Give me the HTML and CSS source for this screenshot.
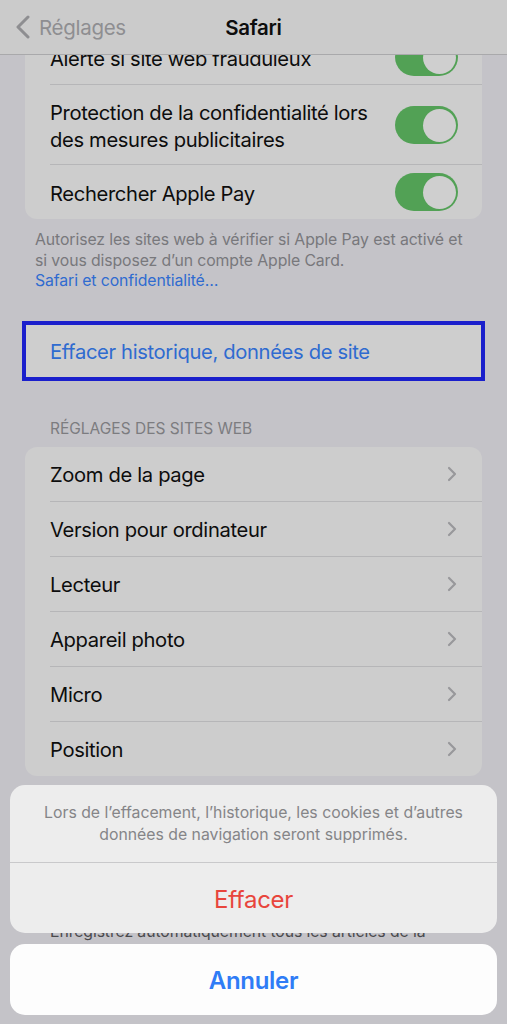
FILE: index.html
```html
<!DOCTYPE html>
<html lang="fr">
<head>
  <meta charset="UTF-8">
  <title>Safari</title>
  <link rel="stylesheet" href="styles.css">
</head>
<body>

  <div class="nav">
    <div class="back">
      <svg width="16" height="24" viewBox="0 0 16 24"><polyline points="13,2 3,12 13,22" fill="none" stroke="#8e8e91" stroke-width="3" stroke-linecap="round" stroke-linejoin="round"/></svg>
      <span>Réglages</span>
    </div>
    <div class="title">Safari</div>
    <div></div>
  </div>

  <div class="page">
    <div class="card">
      <div class="row"><div class="row-in"><span class="label">Alerte si site web frauduleux</span><span class="toggle"></span></div></div>
      <div class="row"><div class="row-in tall"><span class="label">Protection de la confidentialité lors<br>des mesures publicitaires</span><span class="toggle"></span></div></div>
      <div class="row"><div class="row-in"><span class="label">Rechercher Apple Pay</span><span class="toggle"></span></div></div>
    </div>
    <p class="footer">Autorisez les sites web à vérifier si Apple Pay est activé et si vous disposez d’un compte Apple Card.<br><span class="link">Safari et confidentialité…</span></p>

    <div class="highlight">Effacer historique, données de site</div>

    <h2 class="section">Réglages des sites web</h2>
    <div class="card">
      <div class="row"><div class="row-in"><span class="label">Zoom de la page</span><svg class="chev" width="10" height="16" viewBox="0 0 10 16"><polyline points="2,2 8,8 2,14" fill="none" stroke="#98989b" stroke-width="2.2" stroke-linecap="round" stroke-linejoin="round"/></svg></div></div>
      <div class="row"><div class="row-in"><span class="label">Version pour ordinateur</span><svg class="chev" width="10" height="16" viewBox="0 0 10 16"><polyline points="2,2 8,8 2,14" fill="none" stroke="#98989b" stroke-width="2.2" stroke-linecap="round" stroke-linejoin="round"/></svg></div></div>
      <div class="row"><div class="row-in"><span class="label">Lecteur</span><svg class="chev" width="10" height="16" viewBox="0 0 10 16"><polyline points="2,2 8,8 2,14" fill="none" stroke="#98989b" stroke-width="2.2" stroke-linecap="round" stroke-linejoin="round"/></svg></div></div>
      <div class="row"><div class="row-in"><span class="label">Appareil photo</span><svg class="chev" width="10" height="16" viewBox="0 0 10 16"><polyline points="2,2 8,8 2,14" fill="none" stroke="#98989b" stroke-width="2.2" stroke-linecap="round" stroke-linejoin="round"/></svg></div></div>
      <div class="row"><div class="row-in"><span class="label">Micro</span><svg class="chev" width="10" height="16" viewBox="0 0 10 16"><polyline points="2,2 8,8 2,14" fill="none" stroke="#98989b" stroke-width="2.2" stroke-linecap="round" stroke-linejoin="round"/></svg></div></div>
      <div class="row"><div class="row-in"><span class="label">Position</span><svg class="chev" width="10" height="16" viewBox="0 0 10 16"><polyline points="2,2 8,8 2,14" fill="none" stroke="#98989b" stroke-width="2.2" stroke-linecap="round" stroke-linejoin="round"/></svg></div></div>
    </div>

    <!-- section "Liste de lecture" sits under the sheet, only this text peeks through -->
    <p class="footer dark">Enregistrez automatiquement tous les articles de la liste de lecture depuis iCloud pour les lire hors connexion.</p>

    <div class="card last">
      <div class="row"><div class="row-in"></div></div>
    </div>
  </div>

  <div class="sheet">
    <div class="group">
      <p class="message">Lors de l’effacement, l’historique, les cookies et d’autres données de navigation seront supprimés.</p>
      <div class="action danger">Effacer</div>
    </div>
    <div class="group cancel">
      <div class="action">Annuler</div>
    </div>
  </div>

</body>
</html>
```

FILE: styles.css
```css
body {
  margin: 0;
  height: 1024px;
  overflow: hidden;
  background: #c4c3c8;
  font-family: Inter, "Liberation Sans", sans-serif;
  color: #0d0d0d;
}
.nav {
  position: absolute;
  top: 0;
  left: 0;
  right: 0;
  z-index: 2;
  height: 54px;
  display: grid;
  grid-template-columns: 1fr auto 1fr;
  align-items: center;
  background: #cbcbcb;
  border-bottom: 1px solid #a9a9ab;
}
.back {
  display: flex;
  align-items: center;
  gap: 8px;
  padding-left: 15px;
  color: #8e8e91;
  font-size: 20.5px;
  letter-spacing: -0.3px;
}
.title {
  font-size: 20.5px;
  font-weight: 600;
  letter-spacing: -0.3px;
}
.page {
  padding-top: 30px;
}
.card {
  margin: 0 25px;
  background: #cdcdcd;
  border-radius: 12px;
  overflow: hidden;
}
.row {
  padding-left: 25px;
}
.row-in {
  display: flex;
  align-items: center;
  justify-content: space-between;
  min-height: 54px;
  padding-right: 24px;
  border-bottom: 1px solid #b6b6b8;
}
.row:last-child .row-in {
  border-bottom: none;
}
.row-in.tall {
  padding-top: 12px;
  padding-bottom: 11px;
}
.label {
  padding-top: 2px;
  font-size: 20.2px;
  line-height: 27px;
  letter-spacing: -0.35px;
}
.toggle {
  position: relative;
  flex: none;
  width: 63px;
  height: 38px;
  border-radius: 19px;
  background: #52a155;
}
.toggle::after {
  content: "";
  position: absolute;
  top: 2.5px;
  right: 2.5px;
  width: 33px;
  height: 33px;
  border-radius: 50%;
  background: #cfcfcf;
}
.chev {
  flex: none;
  margin-right: 1px;
}
.footer {
  margin: 11px 0 0;
  padding: 0 42px 0 35px;
  font-size: 15.8px;
  line-height: 20.5px;
  color: #78787c;
  letter-spacing: -0.1px;
}
.footer.dark {
  margin-top: 146px;
  padding: 0 60px 0 50px;
  color: #4a4a4d;
}
.link {
  color: #2f6bd0;
}
.highlight {
  margin: 29px 22px 0;
  height: 50px;
  display: flex;
  align-items: center;
  padding-left: 24px;
  padding-top: 2px;
  border: 4px solid #1a1fcc;
  background: #cecece;
  color: #2f6bd0;
  font-size: 20.2px;
  letter-spacing: -0.35px;
}
.section {
  margin: 38px 0 8px;
  padding-left: 50px;
  font-size: 15.5px;
  line-height: 20px;
  font-weight: 400;
  text-transform: uppercase;
  color: #7c7c80;
}
.card.last {
  margin-top: 48px;
}
.sheet {
  position: absolute;
  left: 10px;
  right: 10px;
  bottom: 9px;
  z-index: 3;
  display: flex;
  flex-direction: column;
  gap: 11px;
}
.group {
  background: #ededed;
  border-radius: 15px;
  overflow: hidden;
  text-align: center;
}
.message {
  margin: 0;
  padding: 17px 30px 16px;
  font-size: 15.8px;
  line-height: 22px;
  color: #858588;
  border-bottom: 1px solid #c9c9cb;
}
.action {
  height: 70px;
  display: flex;
  align-items: center;
  justify-content: center;
  padding-top: 2px;
  box-sizing: border-box;
  font-size: 24px;
  color: #2f7cf6;
  font-weight: 600;
  letter-spacing: -0.3px;
}
.action.danger {
  color: #e8453c;
  font-weight: 400;
}
.cancel {
  background: #fdfdfd;
}
.cancel .action {
  height: 71px;
}
```
